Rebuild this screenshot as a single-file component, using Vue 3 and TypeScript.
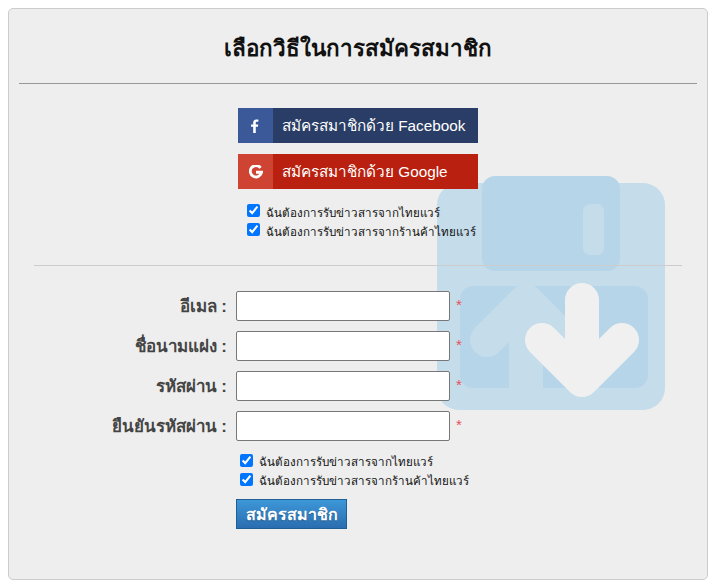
<script setup lang="ts">
const fields = [
  { key: "email", label: "อีเมล :", type: "email" },
  { key: "alias", label: "ชื่อนามแฝง :", type: "text" },
  { key: "password", label: "รหัสผ่าน :", type: "password" },
  { key: "confirm", label: "ยืนยันรหัสผ่าน :", type: "password" },
];

const newsOptions = ["ฉันต้องการรับข่าวสารจากไทยแวร์", "ฉันต้องการรับข่าวสารจากร้านค้าไทยแวร์"];
</script>

<template>
  <div class="page">
    <div class="panel">
      <svg class="watermark" width="240" height="240" viewBox="430 170 240 240">
        <rect x="437" y="183" width="228" height="227" rx="22" fill="#c5dcea" />
        <rect x="482" y="176" width="138" height="95" rx="13" fill="#b7d5e8" />
        <rect x="583" y="204" width="21" height="51" rx="7" fill="#c5dcea" />
        <rect x="460" y="286" width="188" height="102" rx="13" fill="#b7d5e8" />
        <path
          d="M487 340 L526 301 L565 340 M526 301 V400"
          fill="none"
          stroke="#c5dcea"
          stroke-width="34"
          stroke-linecap="round"
          stroke-linejoin="round"
        />
        <path
          d="M542 340 L582 380 L622 340 M582 300 V380"
          fill="none"
          stroke="#f0f0f0"
          stroke-width="34"
          stroke-linecap="round"
          stroke-linejoin="round"
        />
      </svg>

      <h1 class="title">เลือกวิธีในการสมัครสมาชิก</h1>

      <div class="social">
        <a class="social__btn social__btn--fb" href="#">
          <span class="social__icon">
            <svg width="11" height="16" viewBox="0 0 12 18">
              <path
                fill="#fff"
                d="M3.400 17V9.900H1V7.200h2.400V5.200C3.400 2.800 4.800 1.600 7 1.600c1 0 1.900.1 2.200.1v2.500H7.700c-1.200 0-1.400.6-1.400 1.400v1.600h2.800l-.4 2.700H6.300V17z"
              />
            </svg>
          </span>
          <span class="social__text">สมัครสมาชิกด้วย Facebook</span>
        </a>
        <a class="social__btn social__btn--google" href="#">
          <span class="social__icon">
            <svg width="14" height="14" viewBox="0 0 16 16">
              <path
                fill="none"
                stroke="#fff"
                stroke-width="3.200"
                d="M13.200 3.300A6.500 6.500 0 1 0 14.400 8.300H8"
              />
            </svg>
          </span>
          <span class="social__text">สมัครสมาชิกด้วย Google</span>
        </a>
        <div class="checks">
          <label v-for="o in newsOptions" :key="o" class="check">
            <input type="checkbox" checked />
            <span>{{ o }}</span>
          </label>
        </div>
      </div>

      <div class="divider"></div>

      <form class="form" @submit.prevent>
        <div v-for="f in fields" :key="f.key" class="form__row">
          <label class="form__label" :for="f.key">{{ f.label }}</label>
          <input :id="f.key" class="form__input" :type="f.type" />
          <span class="form__req">*</span>
        </div>
        <div class="form__foot">
          <div class="checks">
            <label v-for="o in newsOptions" :key="o" class="check">
              <input type="checkbox" checked />
              <span>{{ o }}</span>
            </label>
          </div>
          <button class="submit" type="submit">สมัครสมาชิก</button>
        </div>
      </form>
    </div>
  </div>
</template>

<style>
html,
body {
  background: #fff;
}
</style>

<style scoped>
.page {
  width: 713px;
  height: 587px;
  padding: 8px 0 0 8px;
  box-sizing: border-box;
  font-family: "Liberation Sans", "Noto Sans", "DejaVu Sans", sans-serif;
}

.panel {
  position: relative;
  width: 700px;
  height: 572px;
  box-sizing: border-box;
  padding: 0 10px;
  background: #eee;
  border: 1px solid #ccc;
  border-radius: 5px;
}

.watermark {
  position: absolute;
  left: 421px;
  top: 161px;
}

.title {
  position: relative;
  margin: 0;
  height: 75px;
  box-sizing: border-box;
  padding-top: 25px;
  border-bottom: 1px solid #999;
  text-align: center;
  font-size: 22.4px;
  line-height: 30px;
  font-weight: 700;
  color: #111;
}

.social {
  position: relative;
  display: flex;
  flex-direction: column;
  gap: 11px;
  margin: 24px 0 0 219px;
  width: 240px;
}

.social__btn {
  display: flex;
  height: 35px;
  text-decoration: none;
  color: #fff;
}

.social__btn--fb {
  background: #2a3d66;
}

.social__btn--fb .social__icon {
  background: #3b5998;
}

.social__btn--google {
  background: #b9200f;
}

.social__btn--google .social__icon {
  background: #cf4333;
}

.social__icon {
  display: flex;
  align-items: center;
  justify-content: center;
  width: 35px;
}

.social__text {
  padding-left: 9px;
  font-size: 15.3px;
  line-height: 35px;
  white-space: nowrap;
}

.checks {
  display: flex;
  flex-direction: column;
  gap: 3px;
}

.social .checks {
  margin: 5px 0 0 9px;
}

.check {
  display: flex;
  align-items: center;
  height: 16px;
  font-size: 11.6px;
  color: #111;
  white-space: nowrap;
}

.check input {
  margin: 0 6px 5px 0;
  width: 13px;
  height: 13px;
}

.divider {
  position: relative;
  margin: 25px 15px 0;
  border-top: 1px solid #ccc;
}

.form {
  position: relative;
  margin-top: 25px;
}

.form__row {
  display: grid;
  grid-template-columns: 208px 214px auto;
  column-gap: 9px;
  align-items: center;
  height: 30px;
  margin-bottom: 10px;
}

.form__row:nth-child(4) {
  margin-bottom: 0;
}

.form__label {
  text-align: right;
  font-size: 16.9px;
  font-weight: 700;
  color: #444;
  white-space: nowrap;
}

.form__input {
  width: 214px;
  height: 30px;
  box-sizing: border-box;
  margin: 0;
  border: 1px solid #777;
  border-radius: 2px;
  background: #fff;
}

.form__req {
  margin: 0 0 4px -3px;
  font-size: 15px;
  color: #e8505a;
}

.form__foot {
  margin: 13px 0 0 217px;
}

.form__foot .checks {
  margin-left: 4px;
}

.form__foot .check input {
  margin-bottom: 3px;
}

.submit {
  display: block;
  width: 111px;
  height: 30px;
  margin-top: 10px;
  padding: 0;
  border: 1px solid #1f5f93;
  background: linear-gradient(#3d97d8, #2a6db0);
  color: #fff;
  font-family: inherit;
  font-size: 16px;
  font-weight: 700;
  text-shadow: 0 1px 1px rgba(0, 0, 0, 0.3);
}
</style>
